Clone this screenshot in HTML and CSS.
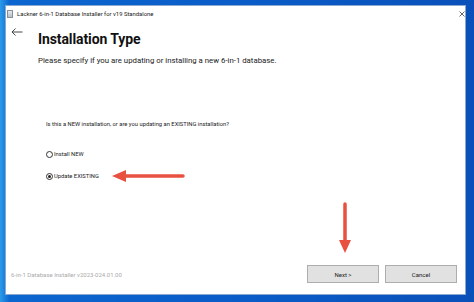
FILE: index.html
```html
<!DOCTYPE html>
<html lang="en">
<head>
    <meta charset="UTF-8">
    <title>Installation Type</title>
    <link rel="stylesheet" href="styles.css">
</head>
<body>
    <div class="window">
        <div class="titlebar">
            <span class="app-icon"></span>
            <span class="title">Lackner 6-in-1 Database Installer for v19 Standalone</span>
            <svg class="close" width="6" height="6" viewBox="0 0 6 6">
                <path d="M0.5 0.5l5 5M5.5 0.5l-5 5" stroke="#555" stroke-width="0.9"/>
            </svg>
        </div>

        <div class="page">
            <div class="back">
                <svg width="12" height="8" viewBox="0 0 12 8">
                    <path d="M11.5 4H1M4.5 0.5L1 4l3.5 3.5" fill="none" stroke="#333" stroke-width="0.9"/>
                </svg>
            </div>
            <div class="content">
                <h1>Installation Type</h1>
                <p class="lead">Please specify if you are updating or installing a new 6-in-1 database.</p>

                <div class="question">
                    <p>Is this a NEW installation, or are you updating an EXISTING installation?</p>
                    <label class="radio"><span class="dot"></span>Install NEW</label>
                    <label class="radio checked"><span class="dot"></span>Update EXISTING
                        <svg class="arrow-left" width="74" height="14" viewBox="0 0 74 14">
                            <path d="M72 7H12" stroke="#e8503f" stroke-width="3.5" stroke-linecap="round"/>
                            <path d="M1 7L15 1v12z" fill="#e8503f"/>
                        </svg>
                    </label>
                </div>
            </div>
        </div>

        <div class="footer">
            <span class="version">6-in-1 Database Installer v2023-024.01.00</span>
            <div class="buttons">
                <button class="btn">Next &gt;
                    <svg class="arrow-down" width="14" height="52" viewBox="0 0 14 52">
                        <path d="M7 2V40" stroke="#e8503f" stroke-width="3.5" stroke-linecap="round"/>
                        <path d="M1 38L7 51l6-13z" fill="#e8503f"/>
                    </svg>
                </button>
                <button class="btn">Cancel</button>
            </div>
        </div>
    </div>
</body>
</html>
```

FILE: styles.css
```css
* {
    margin: 0;
    padding: 0;
    box-sizing: border-box;
}

body {
    width: 474px;
    height: 302px;
    overflow: hidden;
    background: linear-gradient(90deg, #2b9bea 0%, #0c66d0 2%, #0a5ac6 60%, #0a50b9 100%);
    font-family: Roboto, "Open Sans", sans-serif;
    padding: 5px 8px 7px 5px;
}

.window {
    width: 461px;
    height: 290px;
    background: #fff;
    border: 1px solid #8aa8d0;
    display: flex;
    flex-direction: column;
}

.titlebar {
    height: 15px;
    display: flex;
    align-items: center;
    padding: 1px 0 0 1px;
    font-size: 5.9px;
    color: #1a1a1a;
}

.app-icon {
    width: 6px;
    height: 8px;
    border: 1px solid #8a9099;
    background: linear-gradient(#e4e9ef, #b4bec9);
    margin-right: 4px;
}

.title {
    flex: 1;
}

.close {
    margin-right: 0;
}

.page {
    flex: 1;
    display: flex;
}

.back {
    width: 32px;
    padding: 7px 0 0 5px;
}

.back svg {
    display: block;
}

.content {
    flex: 1;
}

h1 {
    font-size: 14px;
    font-weight: 700;
    color: #111;
    margin-top: 9px;
    line-height: 18px;
    letter-spacing: -0.1px;
}

.lead {
    font-size: 7.8px;
    line-height: 11px;
    color: #222;
    margin-top: 7px;
}

.question {
    margin: 54px 0 0 8px;
    font-size: 5.8px;
    line-height: 8px;
    color: #222;
}

.question p {
    margin-bottom: 21px;
}

.radio {
    display: flex;
    align-items: center;
    height: 10px;
    margin-bottom: 12px;
}

.dot {
    width: 7px;
    height: 7px;
    border: 1px solid #333;
    border-radius: 50%;
    margin-right: 1px;
    position: relative;
}

.checked .dot::after {
    content: "";
    position: absolute;
    left: 1px;
    top: 1px;
    width: 3px;
    height: 3px;
    border-radius: 50%;
    background: #222;
}

.arrow-left {
    margin-left: 12px;
}

.footer {
    height: 30px;
    display: flex;
    align-items: center;
    justify-content: space-between;
    padding: 0 8px 10px 5px;
}

.version {
    font-size: 6px;
    color: #aaa;
}

.buttons {
    display: flex;
    gap: 6px;
}

.btn {
    width: 72px;
    height: 18px;
    background: #e1e1e1;
    border: 1px solid #adadad;
    font-family: inherit;
    font-size: 6px;
    color: #222;
    position: relative;
}

.arrow-down {
    position: absolute;
    left: 30px;
    bottom: calc(100% + 12px);
}
```
